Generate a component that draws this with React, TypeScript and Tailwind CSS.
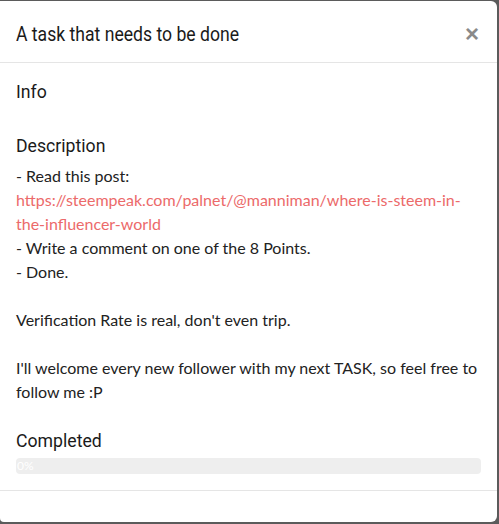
import React from "react";

const heading = "origin-left font-['Roboto',sans-serif] text-[#1a1a1a]";

export default function App() {
  return (
    <div className="w-[499px] h-[524px] bg-[#5b5b5b] pt-px pr-[2px] pb-[2px]">
      <div className="h-full bg-white rounded-r-[6px] rounded-bl-[4px] flex flex-col text-[#222] font-['Lato','Noto_Sans',sans-serif]">
        {/* header */}
        <div className="h-[62px] flex items-center justify-between pl-4 pr-[18px] pt-[4px] border-b border-[#e5e5e5]">
          <h4 className={`${heading} text-[20px] leading-none scale-x-[0.88]`}>A task that needs to be done</h4>
          <button className="text-[#8a8a8a] text-[24px] leading-none font-bold font-['Liberation_Sans',sans-serif]">×</button>
        </div>

        {/* body */}
        <div className="flex-1 px-4 pt-[18px]">
          <h4 className={`${heading} text-[19px] leading-[22px] scale-x-[0.93]`}>Info</h4>

          <h4 className={`${heading} text-[19px] leading-[22px] scale-x-[0.93] mt-[32px]`}>Description</h4>
          <div className="text-[16px] leading-[24px] mt-[7px]">
            <p>- Read this post:</p>
            <p>
              <a className="text-[#ec6a6a]">https://steempeak.com/palnet/@manniman/where-is-steem-in-the-influencer-world</a>
            </p>
            <p>- Write a comment on one of the 8 Points.</p>
            <p>- Done.</p>
            <p>&nbsp;</p>
            <p>Verification Rate is real, don't even trip.</p>
            <p>&nbsp;</p>
            <p>I'll welcome every new follower with my next TASK, so feel free to follow me :P</p>
          </div>

          <h4 className={`${heading} text-[19px] leading-[22px] scale-x-[0.93] mt-[26px]`}>Completed</h4>
          <div className="mt-[6px] h-[16px] rounded-[4px] bg-[#eeeeee] flex items-center">
            <span className="text-[12px] leading-none text-white pl-[1px]">0%</span>
          </div>
        </div>

        {/* footer */}
        <div className="h-[32px] border-t border-[#e5e5e5]" />
      </div>
    </div>
  );
}
